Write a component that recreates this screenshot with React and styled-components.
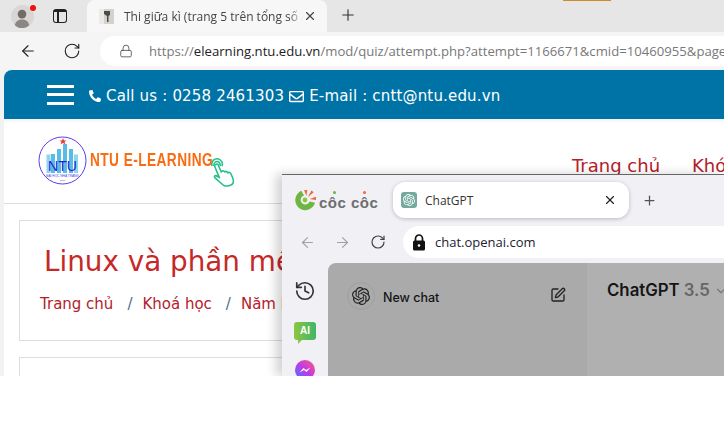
import React from "react";
import styled, { createGlobalStyle } from "styled-components";
import { ArrowLeft, ArrowRight, RotateCw, Lock, X, Plus, History, SquarePen, ChevronDown } from "lucide-react";
import { FaPhone, FaRegEnvelope } from "react-icons/fa";
import { SiOpenai } from "react-icons/si";

const Global = createGlobalStyle`
  html, body { margin: 0; padding: 0; background: #fff; }
  * { box-sizing: border-box; }
`;

const Screen = styled.div`
  position: relative;
  width: 724px;
  height: 376px;
  overflow: hidden;
  background: #f2f2f2;
  font-family: "Open Sans", "Noto Sans", sans-serif;
`;

/* back window */
const TabStrip = styled.div`
  display: flex;
  align-items: flex-end;
  height: 32px;
  background: #e6e6e6;
  padding-left: 11px;
  position: relative;
`;
const OrangeMark = styled.div`
  position: absolute;
  left: 563px;
  top: 0;
  width: 48px;
  height: 1px;
  background: #d08a2a;
`;
const Avatar = styled.div`
  position: relative;
  width: 23px;
  height: 23px;
  margin-bottom: 4px;
  line-height: 0;
`;
const Badge = styled.span`
  position: absolute;
  top: 0;
  right: -2px;
  width: 6px;
  height: 6px;
  border-radius: 50%;
  background: #f01010;
`;
const SideToggle = styled.div`
  margin: 0 20px 9px 19px;
  width: 14px;
  height: 14px;
  border: 1.5px solid #222;
  border-radius: 3px;
  border-top-width: 3px;
  position: relative;
  &::after {
    content: "";
    position: absolute;
    left: 3px;
    top: 0;
    bottom: 0;
    width: 1.5px;
    background: #222;
  }
`;
const Tab = styled.div`
  display: flex;
  align-items: center;
  width: 240px;
  height: 32px;
  background: #f7f7f7;
  border-radius: 8px 8px 0 0;
  padding: 0 10px 0 12px;
`;
const TabFavicon = styled.div`
  width: 15px;
  height: 15px;
  margin-right: 10px;
  line-height: 0;
`;
const TabTitle = styled.span`
  flex: 1;
  font-size: 12px;
  color: #444;
  white-space: nowrap;
  overflow: hidden;
  mask-image: linear-gradient(90deg, #000 92%, transparent);
`;
const NewTab = styled.div`
  margin: 0 0 8px 12px;
  line-height: 0;
  color: #333;
`;
const AddressRow = styled.div`
  display: flex;
  align-items: center;
  height: 38px;
  background: #f5f5f5;
  padding-left: 19px;
`;
const NavIcon = styled.div`
  width: 18px;
  margin-right: ${(p) => p.$gap}px;
  line-height: 0;
  color: ${(p) => p.$color || "#222"};
`;
const UrlPill = styled.div`
  flex: 1;
  min-width: 0;
  display: flex;
  align-items: center;
  height: 30px;
  background: #fff;
  border-radius: 15px 0 0 15px;
  padding-left: 19px;
  color: #555;
  overflow: hidden;
  svg {
    flex-shrink: 0;
  }
`;
const UrlText = styled.span`
  margin-left: 16px;
  flex-shrink: 0;
  font-size: 13.15px;
  color: #787878;
  white-space: nowrap;
  b {
    font-weight: 400;
    color: #222;
  }
`;

const Page = styled.div`
  margin-left: 4px;
  height: 306px;
  background: #fff;
  border-radius: 8px 0 0 0;
  overflow: hidden;
`;
const TopBar = styled.div`
  display: flex;
  align-items: center;
  height: 49px;
  background: #0073a6;
  padding-left: 43px;
  color: #fff;
  font-family: "DejaVu Sans", sans-serif;
  font-size: 15px;
  letter-spacing: 0.17px;
`;
const Burger = styled.div`
  width: 27px;
  height: 20px;
  margin-right: 15px;
  border-top: 3px solid #fff;
  border-bottom: 3px solid #fff;
  position: relative;
  &::after {
    content: "";
    position: absolute;
    left: 0;
    right: 0;
    top: 5px;
    height: 3px;
    background: #fff;
  }
`;
const Contact = styled.span`
  display: inline-flex;
  align-items: center;
  gap: 5px;
  margin: 3px ${(p) => p.$gap || 0}px 0 0;
  white-space: nowrap;
`;
const LogoRow = styled.div`
  display: flex;
  height: 85px;
  border-bottom: 1px solid #ddd;
  box-shadow: inset 0 4px 4px -3px rgba(0, 0, 0, 0.08);
  padding: 17px 0 0 34px;
  font-family: "DejaVu Sans", sans-serif;
`;
const LogoMark = styled.div`
  width: 50px;
  height: 50px;
  line-height: 0;
`;
const LogoText = styled.span`
  margin: 14px 0 0 2px;
  height: 20px;
  line-height: 20px;
  font-family: "Liberation Sans", sans-serif;
  font-size: 19px;
  font-weight: 700;
  color: #f96c12;
  letter-spacing: 0.6px;
  white-space: nowrap;
  transform: scaleX(0.72);
  transform-origin: left;
  width: 122px;
`;
const Hand = styled.div`
  width: 26px;
  height: 30px;
  margin: 21px 0 0 -1px;
  line-height: 0;
`;
const Menu = styled.div`
  display: flex;
  gap: 32px;
  margin: 19px 0 0 335px;
  font-size: 18px;
  color: #b3202a;
  white-space: nowrap;
`;
const Card = styled.div`
  margin: 16px 0 0 15px;
  height: ${(p) => p.$h}px;
  border: 1px solid #ddd;
  font-family: "DejaVu Sans", sans-serif;
  padding: ${(p) => (p.$padded ? "21px 0 0 24px" : 0)};
`;
const Heading = styled.h1`
  margin: 0;
  font-size: 27.8px;
  font-weight: 400;
  color: #c62828;
  white-space: nowrap;
  line-height: 40px;
`;
const Crumbs = styled.div`
  display: flex;
  margin: 13px 0 0 -4px;
  font-size: 15px;
  color: #b3202a;
  white-space: nowrap;
`;
const Sep = styled.span`
  color: #4a6f8f;
  margin: 0 10px 0 14px;
`;

/* front window */
const Window = styled.div`
  position: absolute;
  left: 282px;
  top: 174px;
  width: 442px;
  height: 202px;
  background: #f0f0f5;
  border-top: 1px solid #666;
  box-shadow: -6px 0 10px rgba(0, 0, 0, 0.18);
  display: flex;
  flex-direction: column;
`;
const FrontStrip = styled.div`
  display: flex;
  align-items: center;
  height: 50px;
  padding-left: 12px;
`;
const CocLogo = styled.div`
  display: flex;
  align-items: center;
  gap: 3px;
  width: 99px;
  line-height: 0;
`;
const CocText = styled.span`
  position: relative;
  font-family: "Liberation Sans", sans-serif;
  font-weight: 700;
  font-size: 15px;
  line-height: 16px;
  color: #6e6e6e;
  white-space: nowrap;
  margin-top: 5px;
  letter-spacing: 0.5px;
`;
const Accent = styled.i`
  position: absolute;
  top: -4px;
  left: ${(p) => p.$left}px;
  width: 3px;
  height: 3px;
  border-radius: 50%;
  background: ${(p) => p.$color};
`;
const FrontTab = styled.div`
  display: flex;
  align-items: center;
  width: 236px;
  height: 36px;
  background: #fff;
  border-radius: 12px;
  box-shadow: 0 1px 4px rgba(0, 0, 0, 0.22);
  padding: 0 12px 0 8px;
`;
const GptFavicon = styled.div`
  display: flex;
  align-items: center;
  justify-content: center;
  width: 16px;
  height: 16px;
  background: #74aa9c;
  border-radius: 3px;
  color: #fff;
`;
const FrontTabTitle = styled.span`
  flex: 1;
  margin-left: 8px;
  font-size: 12px;
  color: #333;
`;
const FrontNew = styled.div`
  margin-left: 13px;
  line-height: 0;
  color: #555;
`;
const FrontAddress = styled.div`
  display: flex;
  align-items: center;
  height: 32px;
  margin-top: 1px;
  padding-left: 17px;
`;
const FrontUrlPill = styled.div`
  flex: 1;
  display: flex;
  align-items: center;
  height: 32px;
  background: #fff;
  border-radius: 16px 0 0 16px;
  padding-left: 9px;
  font-size: 13px;
  color: #223;
  gap: 9px;
`;
const FrontBody = styled.div`
  flex: 1;
  display: flex;
  margin-top: 5px;
  min-height: 0;
`;
const Rail = styled.div`
  width: 46px;
  flex-shrink: 0;
  display: flex;
  flex-direction: column;
  align-items: center;
  padding-top: 17px;
  gap: 20px;
  line-height: 0;
  color: #333;
  > * {
    flex-shrink: 0;
  }
`;
const AiBadge = styled.div`
  position: relative;
  width: 22px;
  height: 18px;
  border-radius: 3px;
  background: linear-gradient(90deg, #8cc63f, #3fb56b);
  color: #fff;
  font: 700 10px/17px "Liberation Sans", sans-serif;
  text-align: center;
  &::after {
    content: "";
    position: absolute;
    left: 4px;
    bottom: -4px;
    border: 2px solid transparent;
    border-top-color: #8cc63f;
    border-left-color: #8cc63f;
  }
`;
const Sidebar = styled.div`
  width: 259px;
  flex-shrink: 0;
  display: flex;
  align-items: flex-start;
  background: #aaa;
  border-radius: 8px 0 0 0;
  padding: 19px 21px 0 19px;
  color: #222;
`;
const SideLogo = styled.div`
  display: flex;
  align-items: center;
  justify-content: center;
  width: 28px;
  height: 28px;
  border-radius: 50%;
  border: 1px solid #a0a0a0;
`;
const NewChat = styled.span`
  flex: 1;
  margin: 8px 0 0 8px;
  font-family: "Inter", sans-serif;
  font-size: 12.5px;
  font-weight: 500;
  color: #151515;
`;
const EditIcon = styled.div`
  margin-top: 5px;
  line-height: 0;
`;
const Main = styled.div`
  flex: 1;
  min-width: 0;
  overflow: hidden;
  display: flex;
  align-items: flex-start;
  background: #b0b0b0;
  padding: 17px 0 0 20px;
  font-family: "Inter", sans-serif;
  font-size: 16.8px;
  font-weight: 600;
  color: #151515;
  white-space: nowrap;
  span { color: #666; margin-left: 4px; }
  svg { margin: 4px 0 0 4px; color: #777; flex-shrink: 0; }
`;

const AvatarIcon = () => (
  <svg width="23" height="23" viewBox="0 0 24 24">
    <circle cx="12" cy="12" r="12" fill="#d9d6d3" />
    <circle cx="11.5" cy="9.5" r="4.5" fill="#706c69" />
    <path d="M4 21c1-4.5 4-6 7.500-6s6.500 1.500 7.500 6c-2 2-5 3-7.500 3s-5.500-1-7.500-3z" fill="#8a8683" />
  </svg>
);

const PageFavicon = () => (
  <svg width="15" height="15" viewBox="0 0 15 15">
    <rect width="15" height="15" fill="#d4d2cc" />
    <rect x="0" y="0" width="5" height="15" fill="#eceae6" />
    <path d="M5 2h6v4l-1.500 1v6h-1.500v-6l-3-2z" fill="#4e4c48" />
  </svg>
);

const NtuLogo = () => (
  <svg width="50" height="50" viewBox="0 0 50 50">
    <circle cx="24.500" cy="24.500" r="23.500" fill="#fff" stroke="#5a3de8" strokeWidth="1" />
    <path d="M13 37V18h4v19zM19 37V13h4v24zM25 37V8h4v29zM31 37V13h4v24z" fill="#58bde6" />
    <path d="M8.500 37V18.500h4V37zM36 37V18.500h4V37z" fill="#8fd5ee" />
    <path d="M25 2l1 2.500h2.500l-2 1.500 1 2.500-2.500-1.500-2.500 1.500 1-2.500-2-1.500H24z" fill="#e83a3a" />
    <text x="24.500" y="35" textAnchor="middle" fontFamily="Liberation Sans" fontSize="14" fill="#1d22d8">NTU</text>
    <text x="24.500" y="41" textAnchor="middle" fontFamily="Liberation Sans" fontSize="3.200" fill="#4a3de0">ĐẠI HỌC NHA TRANG</text>
    <text x="24.500" y="45" textAnchor="middle" fontFamily="Liberation Sans" fontSize="2.500" fill="#4a3de0">1959</text>
  </svg>
);

const HandIcon = () => (
  <svg width="26" height="30" viewBox="0 0 28 32" fill="none" stroke="#22c08a" strokeWidth="1.700" strokeLinejoin="round" strokeLinecap="round">
    <path d="M1 9c-1-5 3-8 7-7 3 1 5 4 4 7M3 9c0-3 2-5 5-4 2 1 2 3 2 4" />
    <path d="M5 8c1-1 3-1 3 1l3 7 1-1c1-1 2 0 3 1 1-1 2-1 3 1 1-1 3-1 4 2 2 4 3 8 1 10-2 2-8 3-10 1l-9-8c-1-2 1-3 3-1l2 1-5-12c0-1 0-2 1-2z" />
  </svg>
);

const CocIcon = () => (
  <svg width="22" height="22" viewBox="0 0 24 24">
    <path d="M8 2a11 11 0 1 0 15 13l-6-1.500a5 5 0 1 1-6-6.500z" fill="#6fb544" />
    <circle cx="12" cy="12" r="2.600" fill="#8cc63f" />
    <path d="M11 1l3.500 0-1 6.500zM19 1.500l2.500 2-6.500 5.500zM24 8.500v3.500l-7-1z" fill="#f0693a" />
  </svg>
);

const FilledLock = () => (
  <svg width="14" height="17" viewBox="0 0 14 17">
    <path d="M3.500 7V4.500a3.500 3.500 0 0 1 7 0V7" fill="none" stroke="#111" strokeWidth="1.700" />
    <rect x="1" y="6.500" width="12" height="10" rx="1.500" fill="#111" />
    <circle cx="7" cy="11.500" r="1.300" fill="#fff" />
  </svg>
);

const MessengerIcon = () => (
  <svg width="20" height="20" viewBox="0 0 20 20">
    <defs>
      <linearGradient id="msgr" x1="0" y1="1" x2="1" y2="0">
        <stop offset="0" stopColor="#3a7bff" />
        <stop offset="0.5" stopColor="#c03be8" />
        <stop offset="1" stopColor="#ff5a7a" />
      </linearGradient>
    </defs>
    <circle cx="10" cy="10" r="10" fill="url(#msgr)" />
    <path d="M4.500 12.500L8.500 8l2.500 2 4.500-2.500-4 4.500-2.500-2z" fill="#fff" />
  </svg>
);

export default function App() {
  return (
    <>
      <Global />
      <Screen>
        <TabStrip>
          <OrangeMark />
          <Avatar>
            <AvatarIcon />
            <Badge />
          </Avatar>
          <SideToggle />
          <Tab>
            <TabFavicon>
              <PageFavicon />
            </TabFavicon>
            <TabTitle>Thi giữa kì (trang 5 trên tổng số 8</TabTitle>
            <X size={14} color="#444" />
          </Tab>
          <NewTab>
            <Plus size={18} strokeWidth={1.5} />
          </NewTab>
        </TabStrip>
        <AddressRow>
          <NavIcon $gap={26}>
            <ArrowLeft size={18} strokeWidth={1.5} />
          </NavIcon>
          <NavIcon $gap={19}>
            <RotateCw size={18} strokeWidth={1.5} />
          </NavIcon>
          <UrlPill>
            <Lock size={14} strokeWidth={1.5} />
            <UrlText>
              https://<b>elearning.ntu.edu.vn</b>/mod/quiz/attempt.php?attempt=1166671&amp;cmid=10460955&amp;page=4
            </UrlText>
          </UrlPill>
        </AddressRow>
        <Page>
          <TopBar>
            <Burger />
            <Contact $gap={5}>
              <FaPhone size={12} style={{ transform: "scaleX(-1)" }} /> Call us : 0258 2461303
            </Contact>
            <Contact>
              <FaRegEnvelope size={15} /> E-mail : cntt@ntu.edu.vn
            </Contact>
          </TopBar>
          <LogoRow>
            <LogoMark>
              <NtuLogo />
            </LogoMark>
            <LogoText>NTU E-LEARNING</LogoText>
            <Hand>
              <HandIcon />
            </Hand>
            <Menu>
              <span>Trang chủ</span>
              <span>Khóa học</span>
            </Menu>
          </LogoRow>
          <Card $h={121} $padded>
            <Heading>Linux và phần mềm</Heading>
            <Crumbs>
              <span>Trang chủ</span>
              <Sep>/</Sep>
              <span>Khoá học</span>
              <Sep>/</Sep>
              <span>Năm học</span>
            </Crumbs>
          </Card>
          <Card $h={60} />
        </Page>

        <Window>
          <FrontStrip>
            <CocLogo>
              <CocIcon />
              <CocText>
                côc côc
                <Accent $left={14} $color="#6fb544" />
                <Accent $left={44} $color="#f0693a" />
              </CocText>
            </CocLogo>
            <FrontTab>
              <GptFavicon>
                <SiOpenai size={12} />
              </GptFavicon>
              <FrontTabTitle>ChatGPT</FrontTabTitle>
              <X size={14} color="#222" />
            </FrontTab>
            <FrontNew>
              <Plus size={15} />
            </FrontNew>
          </FrontStrip>
          <FrontAddress>
            <NavIcon $gap={17} $color="#a0a0a8">
              <ArrowLeft size={17} strokeWidth={1.6} />
            </NavIcon>
            <NavIcon $gap={18} $color="#a0a0a8">
              <ArrowRight size={17} strokeWidth={1.6} />
            </NavIcon>
            <NavIcon $gap={15} $color="#444">
              <RotateCw size={16} strokeWidth={1.8} />
            </NavIcon>
            <FrontUrlPill>
              <FilledLock />
              chat.openai.com
            </FrontUrlPill>
          </FrontAddress>
          <FrontBody>
            <Rail>
              <History size={22} strokeWidth={1.8} />
              <AiBadge>AI</AiBadge>
              <MessengerIcon />
            </Rail>
            <Sidebar>
              <SideLogo>
                <SiOpenai size={18} />
              </SideLogo>
              <NewChat>New chat</NewChat>
              <EditIcon>
                <SquarePen size={16} strokeWidth={2} />
              </EditIcon>
            </Sidebar>
            <Main>
              ChatGPT<span>3.5</span>
              <ChevronDown size={14} />
            </Main>
          </FrontBody>
        </Window>
      </Screen>
    </>
  );
}
